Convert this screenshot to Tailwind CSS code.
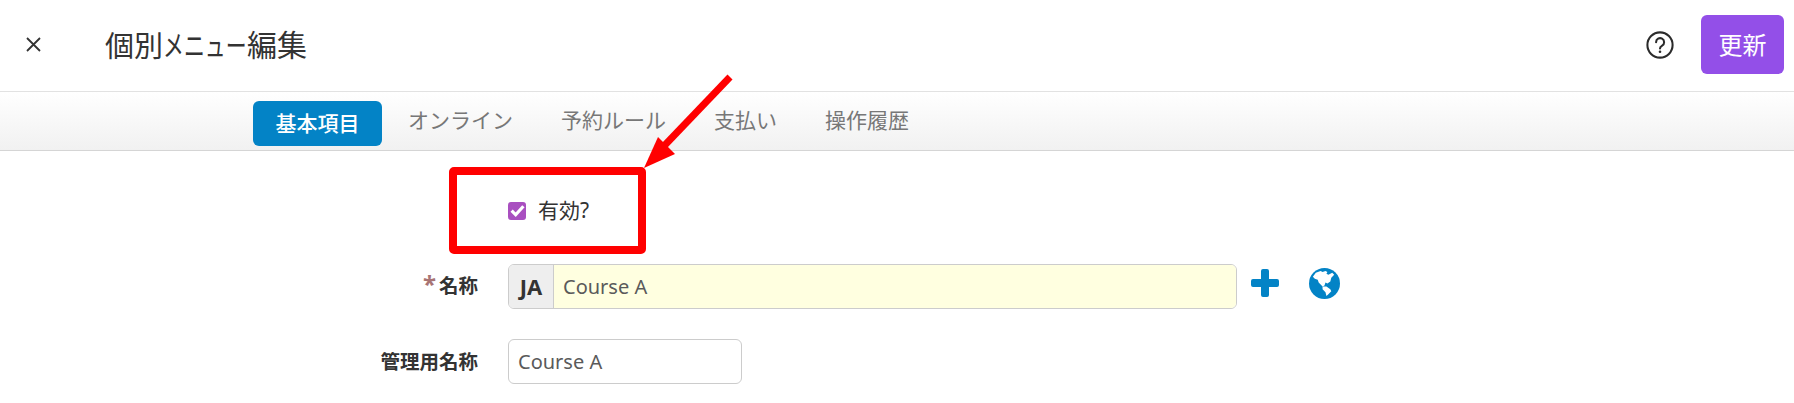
<!DOCTYPE html>
<html lang="ja">
<head>
  <meta charset="UTF-8">
  <title>個別メニュー編集</title>
  <script src="https://cdn.jsdelivr.net/npm/@tailwindcss/browser@4"></script>
</head>
<body class="bg-white overflow-hidden font-['Noto_Sans','Noto_Sans_CJK_JP',sans-serif] text-[#333]">
<div class="relative w-[1794px] h-[403px] overflow-hidden">
  <!-- header -->
  <header class="h-[92px] flex items-center border-b border-[#e2e2e2] pl-[26px] pr-[10px] pb-[2px]">
    <svg class="w-[15px] h-[15px]" viewBox="0 0 15 15" fill="none" stroke="#333" stroke-width="1.8"><path d="M1 1 14 14M14 1 1 14"/></svg>
    <h1 class="ml-[64px] mt-[1px] text-[29px] leading-none text-[#333] font-normal flex items-center">個別<span class="inline-block w-[84px] whitespace-nowrap origin-left scale-x-[0.72]">メニュー</span><span class="text-[30px]">編集</span></h1>
    <svg class="ml-auto w-[28px] h-[28px]" viewBox="0 0 30 30" fill="none" stroke="#2b2b2b" stroke-width="2.2"><circle cx="15" cy="15" r="13.5"/><path d="M10.8 12a4.3 4.3 0 1 1 6.5 3.7c-1.5.9-2.3 1.6-2.3 3" stroke-linecap="round"/><circle cx="15" cy="22.3" r="1.4" fill="#2b2b2b" stroke="none"/></svg>
    <button class="ml-[27px] w-[83px] h-[59px] rounded-[6px] bg-[#934fe8] text-white text-[24px]">更新</button>
  </header>
  <!-- tabs -->
  <nav class="h-[59px] flex items-start pt-[9px] pl-[253px] border-b border-[#d5d5d5] bg-gradient-to-b from-white to-[#f1f1f1] text-[21px] leading-[45px] text-[#777]">
    <a class="w-[129px] h-[45px] flex items-center justify-center rounded-[6px] bg-[#0383c6] text-white font-medium">基本項目</a>
    <a class="ml-[26px] -mt-[3px]">オンライン</a>
    <a class="ml-[48px] -mt-[3px]">予約ルール</a>
    <a class="ml-[48px] -mt-[3px]">支払い</a>
    <a class="ml-[48px] -mt-[3px]">操作履歴</a>
  </nav>
  <!-- form -->
  <main class="pt-[16px]">
    <div class="ml-[449px] w-[197px] h-[87px] border-[8px] border-[#ff0000] rounded-[5px] flex items-center pl-[51px]">
      <span class="w-[18px] h-[18px] rounded-[3px] bg-[#a94fc0] flex items-center justify-center">
        <svg class="w-[15px] h-[15px]" viewBox="0 0 14 14" fill="none" stroke="#fff" stroke-width="3"><path d="M1.5 7.2 5.3 11 12.5 3"/></svg>
      </span>
      <span class="ml-[12px] text-[21px] text-[#333]">有効?</span>
    </div>
    <div class="mt-[10px] flex items-center h-[45px]">
      <label class="w-[478px] text-right text-[19.5px] font-bold text-[#333] -mt-[1px]"><span class="text-[#a87474] text-[24px] leading-none mr-[3px]">*</span>名称</label>
      <div class="ml-[30px] w-[729px] h-[45px] flex rounded-[6px] border border-[#ccc] overflow-hidden">
        <span class="w-[45px] flex items-center justify-center bg-[#eee] border-r border-[#ccc] font-bold text-[22px]">JA</span>
        <span class="flex-1 bg-[#ffffe0] pl-[9px] flex items-center text-[20px] text-[#5a5a5a]">Course A</span>
      </div>
      <svg class="ml-[14px] w-[28px] h-[28px] -mt-[7px]" viewBox="0 0 28 28" fill="#0383c6"><path d="M10 2a2 2 0 0 1 2-2h4a2 2 0 0 1 2 2v8h8a2 2 0 0 1 2 2v4a2 2 0 0 1-2 2h-8v8a2 2 0 0 1-2 2h-4a2 2 0 0 1-2-2v-8H2a2 2 0 0 1-2-2v-4a2 2 0 0 1 2-2h8z"/></svg>
      <svg class="ml-[30px] w-[31px] h-[31px] -mt-[6px]" viewBox="0 0 32 32"><circle cx="16" cy="16" r="16" fill="#0383c6"/><path d="M4 9l3-4 5-2 2 1 3-1 2 1-1 2 2 1 4-2 2 2-3 3-1 4-3 2-2-1-1 3-2 1-4-4-1-3-3-1zM14 19l4 0 4 3 1 2-3 3-2 2-1-4-3-3z" fill="#fff"/></svg>
    </div>
    <div class="mt-[30px] flex items-center h-[45px]">
      <label class="w-[478px] text-right text-[19.5px] font-bold text-[#333]">管理用名称</label>
      <div class="ml-[30px] w-[234px] h-[45px] flex items-center pl-[9px] rounded-[6px] border border-[#ccc] text-[20px] text-[#5a5a5a]">Course A</div>
    </div>
  </main>
  <!-- arrow -->
  <svg class="absolute left-0 top-0 pointer-events-none" width="1794" height="403" fill="none">
    <path d="M730 77 664 146" stroke="#ff0000" stroke-width="7"/>
    <path d="M644 168 658 137 675 154z" fill="#ff0000"/>
  </svg>
</div>
</body>
</html>
